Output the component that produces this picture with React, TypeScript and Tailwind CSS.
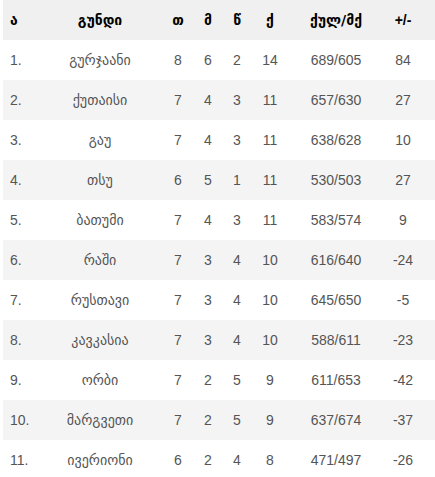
import React from "react";

const rows: [string, string, number, number, number, number, string, string][] = [
  ["1.", "გურჯაანი", 8, 6, 2, 14, "689/605", "84"],
  ["2.", "ქუთაისი", 7, 4, 3, 11, "657/630", "27"],
  ["3.", "გაუ", 7, 4, 3, 11, "638/628", "10"],
  ["4.", "თსუ", 6, 5, 1, 11, "530/503", "27"],
  ["5.", "ბათუმი", 7, 4, 3, 11, "583/574", "9"],
  ["6.", "რაში", 7, 3, 4, 10, "616/640", "-24"],
  ["7.", "რუსთავი", 7, 3, 4, 10, "645/650", "-5"],
  ["8.", "კავკასია", 7, 3, 4, 10, "588/611", "-23"],
  ["9.", "ორბი", 7, 2, 5, 9, "611/653", "-42"],
  ["10.", "მარგვეთი", 7, 2, 5, 9, "637/674", "-37"],
  ["11.", "ივერიონი", 6, 2, 4, 8, "471/497", "-26"],
];

const geo = "font-['DejaVu_Sans',sans-serif]";

function Row({ cells, bg, header }: { cells: (string | number)[]; bg: string; header?: boolean }) {
  const txt = header ? "font-bold text-black" : "text-[#555555]";
  const g = header ? geo : "";
  return (
    <div className={`flex h-[40px] items-center text-[14px] ${bg} ${txt}`}>
      <div className={`w-[49px] pl-[7px] ${g}`}>{cells[0]}</div>
      <div className={`w-[96px] text-center ${geo}`}>{cells[1]}</div>
      <div className={`ml-[15px] w-[30px] text-center ${g}`}>{cells[2]}</div>
      <div className={`w-[30px] text-center ${g}`}>{cells[3]}</div>
      <div className={`w-[28px] text-center ${g}`}>{cells[4]}</div>
      <div className={`w-[38px] text-center ${g}`}>{cells[5]}</div>
      <div className="w-[94px] text-center">
        {header ? <span className={geo}>ქულ/მქ</span> : cells[6]}
      </div>
      <div className="w-[40px] text-center">{cells[7]}</div>
    </div>
  );
}

export default function App() {
  return (
    <div className="h-[477px] w-[435px] overflow-hidden bg-white pl-[3px] font-['Liberation_Sans',sans-serif]">
      <Row header bg="bg-[#f0f0f0]" cells={["ა", "გუნდი", "თ", "მ", "წ", "ქ", "ქულ/მქ", "+/-"]} />
      {rows.map((r, i) => (
        <Row key={i} bg={i % 2 === 1 ? "bg-[#f4f4f4]" : "bg-white"} cells={r} />
      ))}
    </div>
  );
}
